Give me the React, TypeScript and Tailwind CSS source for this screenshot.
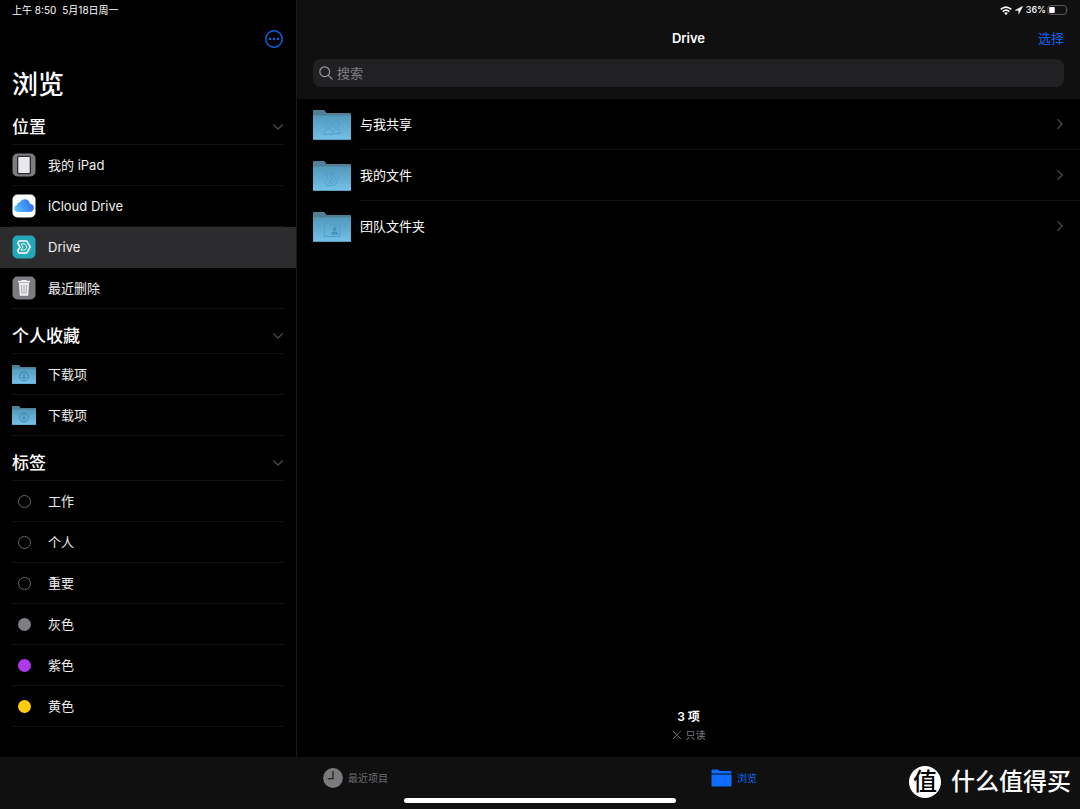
import React from 'react';

type IconProps = { className?: string };

const MoreIcon = ({ className }: IconProps) => (
  <svg viewBox="0 0 18 18" className={className} fill="none">
    <circle cx="9" cy="9" r="8.2" stroke="currentColor" strokeWidth="1.4" />
    <circle cx="5.1" cy="9" r="1.2" fill="currentColor" />
    <circle cx="9" cy="9" r="1.2" fill="currentColor" />
    <circle cx="12.9" cy="9" r="1.2" fill="currentColor" />
  </svg>
);

const ChevronDown = ({ className }: IconProps) => (
  <svg viewBox="0 0 10 6" className={className} fill="none" stroke="currentColor" strokeWidth="1.3">
    <path d="M0.6 0.8 L5 5 L9.4 0.8" strokeLinecap="round" strokeLinejoin="round" />
  </svg>
);

const ChevronRight = ({ className }: IconProps) => (
  <svg viewBox="0 0 6 10" className={className} fill="none" stroke="currentColor" strokeWidth="1.3">
    <path d="M0.8 0.6 L5.2 5 L0.8 9.4" strokeLinecap="round" strokeLinejoin="round" />
  </svg>
);

const IpadIcon = () => (
  <svg viewBox="0 0 24 24" className="size-6">
    <rect x="0.5" y="0.5" width="23" height="23" rx="5" fill="#7b7b80" />
    <rect x="5" y="2.8" width="14" height="18.4" rx="1.6" fill="#2c2c2e" />
    <rect x="6.3" y="4.1" width="11.4" height="15.8" rx="0.5" fill="#e9e8ee" />
  </svg>
);

const CloudIcon = () => (
  <svg viewBox="0 0 24 24" className="size-6">
    <defs>
      <linearGradient id="cloud" x1="0" y1="0.7" x2="1" y2="0.4">
        <stop offset="0" stopColor="#5ac3f8" />
        <stop offset="1" stopColor="#2b6cf0" />
      </linearGradient>
    </defs>
    <rect x="0.5" y="0.5" width="23" height="23" rx="5" fill="#fff" />
    <path
      d="M6.2 18 C3.9 18 2.3 16.5 2.3 14.5 C2.3 12.6 3.5 11.2 5.1 10.9 C5.2 9.3 6.4 8.2 8 8.3 C8.9 6.4 10.6 5.3 12.7 5.3 C15.4 5.3 17.5 7.2 18.1 9.8 C20.3 10 21.9 11.6 21.9 13.8 C21.9 16.2 20.1 18 17.8 18 Z"
      fill="url(#cloud)"
    />
  </svg>
);

const DriveIcon = () => (
  <svg viewBox="0 0 24 24" className="size-6" fill="none" stroke="#fff" strokeLinejoin="round">
    <rect x="0.5" y="0.5" width="23" height="23" rx="5" fill="#24a8b8" stroke="none" />
    <path d="M6.9 5.9 H14.6 L18.3 12 L14.6 18.1 H6.9 L5.7 15.7 L8.1 12 L5.7 8.3 Z" strokeWidth="1.5" />
    <path d="M9 8.9 H12.9 L14.9 12 L12.9 15.1 H9 L11 12 Z" strokeWidth="0.9" />
  </svg>
);

const TrashIcon = () => (
  <svg viewBox="0 0 24 24" className="size-6">
    <rect x="0.5" y="0.5" width="23" height="23" rx="5" fill="#7b7b80" />
    <path d="M9.6 4.7 V3.9 H14.4 V4.7 H18 V6.4 H6 V4.7 Z" fill="#f3f3f3" />
    <path d="M7 7 H17 L16.2 19.8 H7.8 Z" fill="#f3f3f3" />
    <path d="M9.6 8.6 L9.9 18.2 M12 8.6 V18.2 M14.4 8.6 L14.1 18.2" stroke="#8e8e93" strokeWidth="0.8" />
  </svg>
);

const FolderShape = ({ id, className, children }: { id: string; className: string; children: React.ReactNode }) => (
  <svg viewBox="0 0 38 30" className={className}>
    <defs>
      <linearGradient id={id} x1="0" y1="0" x2="0" y2="1">
        <stop offset="0" stopColor="#5299bb" />
        <stop offset="1" stopColor="#75c1e9" />
      </linearGradient>
    </defs>
    <path d="M0 1 Q0 0 1 0 H10.5 Q11.5 0 12.2 1 L13.5 3 H37 Q38 3 38 4 V10 H0 Z" fill="#527f96" />
    <path d="M0 5.6 H38 V29 Q38 30 37 30 H1 Q0 30 0 29 Z" fill={`url(#${id})`} />
    <path d="M0.3 29.5 H37.7" stroke="#4f90b1" strokeWidth="0.7" />
    <g fill="none" stroke="#4a9dc8" strokeWidth="0.9" strokeLinejoin="round">{children}</g>
  </svg>
);

const DownloadFolder = ({ id }: { id: string }) => (
  <FolderShape id={id} className="h-[19px] w-6">
    <g stroke="#38789a" strokeWidth="1.3">
      <circle cx="19" cy="18" r="7" />
      <path d="M19 13.8 V21.6 M16 19 L19 22 L22 19" />
    </g>
  </FolderShape>
);

const SharedGlyph = () => (
  <>
    <circle cx="15.5" cy="14" r="3.2" />
    <circle cx="23.2" cy="14" r="3.2" />
    <path d="M11 24.4 V22.4 Q11 19 15.5 19 Q20 19 20 22.4 V24.4 Z" />
    <path d="M21.5 19 Q27 18.6 27 22.2 V23.4 H21.4" />
  </>
);

const MineGlyph = () => (
  <>
    <path d="M12.4 12 H22 L26 17 L21.6 24.6 H14 L11.6 21.8 L14.8 17.6 Z" />
    <path d="M17 14.4 L19 17.6 L16 22 H20 L22.8 17.4 L20.6 14.4 Z" />
  </>
);

const TeamGlyph = () => (
  <>
    <path d="M11.4 11.4 H16 L17.4 13.2 H26.8 V24.4 H11.4 Z" />
    <circle cx="21.6" cy="17.2" r="1.9" fill="#3f92be" stroke="none" />
    <path d="M18 22.4 Q18 19.6 21.6 19.6 Q25.2 19.6 25.2 22.4 Z" fill="#3f92be" stroke="none" />
  </>
);

const Dot = ({ className }: IconProps) => (
  <span className="flex w-6 justify-center">
    <span className={`size-[13px] rounded-full ${className}`} />
  </span>
);

const places = [
  { label: '我的 iPad', icon: <IpadIcon /> },
  { label: 'iCloud Drive', icon: <CloudIcon /> },
  { label: 'Drive', icon: <DriveIcon />, active: true },
  { label: '最近删除', icon: <TrashIcon /> },
];

const favorites = [
  { label: '下载项', icon: <DownloadFolder id="dl-1" /> },
  { label: '下载项', icon: <DownloadFolder id="dl-2" /> },
];

const tags = [
  { label: '工作', icon: <Dot className="border border-[#6a6a6e]" /> },
  { label: '个人', icon: <Dot className="border border-[#6a6a6e]" /> },
  { label: '重要', icon: <Dot className="border border-[#6a6a6e]" /> },
  { label: '灰色', icon: <Dot className="bg-[#7e7e83]" /> },
  { label: '紫色', icon: <Dot className="bg-[#af38ee]" /> },
  { label: '黄色', icon: <Dot className="bg-[#ffcc0f]" /> },
];

const folders = [
  { id: 'shared', label: '与我共享', glyph: <SharedGlyph /> },
  { id: 'mine', label: '我的文件', glyph: <MineGlyph /> },
  { id: 'team', label: '团队文件夹', glyph: <TeamGlyph /> },
];

interface SectionProps {
  title: string;
  items: { label: string; icon: React.ReactNode; active?: boolean }[];
}

const Section: React.FC<SectionProps> = ({ title, items }) => (
  <section className="mb-[9px]">
    <button className="flex w-full px-3">
      <span className="flex h-9 flex-1 items-center justify-between border-b border-[#131314]">
        <span className="text-[17px] leading-6 font-medium">{title}</span>
        <ChevronDown className="mr-px h-[6px] w-[10px] text-[#4a4a4d]" />
      </span>
    </button>
    <ul>
      {items.map((item, i) => (
        <li key={i}>
          <button className={`flex h-[41px] w-full px-3 ${item.active ? 'bg-[#2c2c2e]' : ''}`}>
            <span
              className={`flex h-full flex-1 items-center gap-3 border-b ${
                item.active ? 'border-transparent' : 'border-[#131314]'
              }`}
            >
              {item.icon}
              <span className="text-[13px] leading-5 text-[#f0f0f0]">{item.label}</span>
            </span>
          </button>
        </li>
      ))}
    </ul>
  </section>
);

const StatusIcons = () => (
  <div className="flex h-5 items-center justify-end pr-[11px] text-[9px] leading-4 font-medium">
    <svg viewBox="0 0 12 9" className="mr-[3px] h-[9px] w-3" fill="none" stroke="#fff" strokeWidth="1.6">
      <path d="M0.7 3.4 Q6 -1.3 11.3 3.4" />
      <path d="M2.7 5.6 Q6 2.7 9.3 5.6" />
      <path d="M6 8.9 L4.1 7 Q6 5.6 7.9 7 Z" fill="#fff" stroke="none" />
    </svg>
    <svg viewBox="0 0 8 8" className="mr-[3px] size-2" fill="#fff" stroke="#fff" strokeWidth="0.6">
      <path d="M7.6 0.4 L0.4 4.2 H3.8 V7.6 Z" strokeLinejoin="round" />
    </svg>
    <span>36%</span>
    <svg viewBox="0 0 22 10" className="ml-px h-[10px] w-[22px]">
      <rect x="0.9" y="0.6" width="18.4" height="8.8" rx="2.4" fill="none" stroke="#5c5c5e" />
      <rect x="2.2" y="2" width="5.6" height="6" rx="1" fill="#fff" />
      <path d="M20.4 3.4 Q21.8 5 20.4 6.6 Z" fill="#5c5c5e" />
    </svg>
  </div>
);

export default function App() {
  return (
    <div className="relative flex min-h-screen flex-col bg-black font-[Inter,'Noto_Sans_CJK_SC',sans-serif] text-white">
      <div className="flex flex-1">
        <aside className="w-[297px] shrink-0 border-r border-[#1a1a1b]">
          <div className="flex h-5 items-center gap-[6px] pl-3 text-[10px] leading-4">
            <span>上午 8:50</span>
            <span>5月18日周一</span>
          </div>
          <div className="flex h-[38px] items-center justify-end pr-[13px]">
            <button aria-label="更多" className="text-[#0f65f0]">
              <MoreIcon className="size-[18px]" />
            </button>
          </div>
          <h1 className="h-[51px] pt-[2px] pl-3 text-[26px] leading-[50px] font-medium">浏览</h1>
          <Section title="位置" items={places} />
          <Section title="个人收藏" items={favorites} />
          <Section title="标签" items={tags} />
        </aside>

        <main className="flex min-w-0 flex-1 flex-col">
          <header className="bg-[#101010] pb-3">
            <StatusIcons />
            <div className="mb-[3px] grid h-9 grid-cols-3 items-center px-4">
              <span />
              <h2 className="text-center text-[13px] leading-5 font-semibold">Drive</h2>
              <button className="justify-self-end text-[13px] leading-5 text-[#0f65f0]">选择</button>
            </div>
            <label className="mx-4 flex h-7 items-center gap-1 rounded-lg bg-[#212123] px-1.5">
              <svg viewBox="0 0 14 14" className="size-[14px]" fill="none" stroke="#98989d" strokeWidth="1.2">
                <circle cx="5.7" cy="5.7" r="4.9" />
                <path d="M9.3 9.3 L13.2 13.2" strokeLinecap="round" />
              </svg>
              <input
                type="search"
                aria-label="搜索"
                placeholder="搜索"
                className="min-w-0 flex-1 bg-transparent text-[13px] leading-5 outline-none placeholder:text-[#7f7f84]"
              />
            </label>
          </header>

          <ul className="flex-1">
            {folders.map((folder) => (
              <li key={folder.id} className="group">
                <button className="flex h-[51px] w-full items-center pl-4 text-left">
                  <FolderShape id={folder.id} className="mr-[9px] h-[30px] w-[38px]">
                    {folder.glyph}
                  </FolderShape>
                  <span className="flex h-full flex-1 items-center justify-between border-b border-[#131314] pr-[17px] group-last:border-transparent">
                    <span className="text-[13px] leading-5">{folder.label}</span>
                    <ChevronRight className="h-[10px] w-[6px] text-[#4a4a4d]" />
                  </span>
                </button>
              </li>
            ))}
          </ul>

          <div className="flex flex-col items-center pb-[14px]">
            <p className="text-[12px] leading-5 font-semibold">3 项</p>
            <p className="flex items-center gap-1 text-[10px] leading-4 text-[#7c7c80]">
              <svg viewBox="0 0 10 10" className="size-[10px]" fill="none" stroke="currentColor">
                <path d="M1 9 L6.6 3.2 M7.4 2.4 L8.8 1 M1 1 L4.4 4.4 M5.6 5.6 L9 9" />
              </svg>
              只读
            </p>
          </div>
        </main>
      </div>

      <nav className="flex h-[52px] justify-center gap-[323px] bg-[#101010] pb-[10px] text-[10px] leading-4">
        <button className="flex items-center gap-[5px] text-[#6e6e70]">
          <svg viewBox="0 0 20 20" className="size-5">
            <circle cx="10" cy="10" r="9.9" fill="#7a7a7c" />
            <path d="M10 3.2 V10.8 H4.8" fill="none" stroke="#101010" strokeWidth="1.1" />
          </svg>
          最近项目
        </button>
        <button className="flex items-center gap-[5px] text-[#0f65f0]">
          <svg viewBox="0 0 21 18" className="h-[18px] w-[21px]" fill="#0d6bff">
            <path d="M0.5 4.6 V1.7 Q0.5 0.5 1.7 0.5 H6.4 Q7.1 0.5 7.6 1.1 L8.4 2 H19.2 Q20.5 2 20.5 3.3 V4.6 Z" />
            <path d="M0.5 5.6 H20.5 V16.3 Q20.5 17.6 19.2 17.6 H1.8 Q0.5 17.6 0.5 16.3 Z" />
          </svg>
          浏览
        </button>
      </nav>

      {/* home indicator */}
      <div className="absolute bottom-[6px] left-1/2 h-[5px] w-[272px] -translate-x-1/2 rounded-full bg-white" />

      {/* watermark */}
      <div className="absolute right-[9px] bottom-[11px] flex items-center gap-[10px]">
        <span className="flex size-8 items-center justify-center rounded-full bg-white text-[24px] leading-8 font-medium text-black">
          值
        </span>
        <span className="text-[24px] leading-8 font-medium">什么值得买</span>
      </div>
    </div>
  );
}
